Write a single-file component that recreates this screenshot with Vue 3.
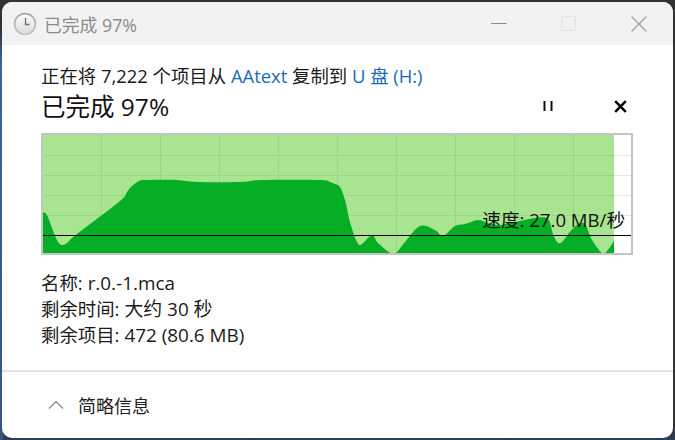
<script setup>
const verticals = [101, 160, 219, 278, 337, 396, 455, 514, 573]
const horizontals = [155.5, 175.5, 195.5, 215.5, 235.5]
const top = [
  [43,212],[47,215],[52,228],[58,242],[63,245],[68,242],[77,234],[120,201],[127,192],[132,186],[140,180.5],[150,180],
  [177,180],[197,182],[240,182],[263,180],[320,180],[330,182],[335,184],[340,187],[345,200],[350,222],[357,242],
  [362,244],[372,235],[378,243],[392,254],[397,252],[405,242],[420,226],[435,230],[443,236],[455,226],[465,224],
  [478,220],[488,223],[500,225],[520,221],[535,218],[548,219],[553,234],[558,243],[563,241],[568,234],[577,225],
  [585,224],[592,240],[602,253],[607,251],[614,241]
]
// Catmull-Rom through the sampled speed values
let curve = 'M43 253 L43 212'
for (let i = 0; i < top.length - 1; i++) {
  const a = top[Math.max(i - 1, 0)]
  const b = top[i]
  const c = top[i + 1]
  const d = top[Math.min(i + 2, top.length - 1)]
  const c1 = [b[0] + (c[0] - a[0]) / 6, b[1] + (c[1] - a[1]) / 6]
  const c2 = [c[0] - (d[0] - b[0]) / 6, c[1] - (d[1] - b[1]) / 6]
  curve += ` C${c1[0].toFixed(1)} ${c1[1].toFixed(1)} ${c2[0].toFixed(1)} ${c2[1].toFixed(1)} ${c[0]} ${c[1]}`
}
const area = curve + ' L614 253 Z'
</script>

<template>
  <div class="desk">
    <div class="win">
      <header class="bar">
        <svg class="clock" width="24" height="24" viewBox="0 0 24 24">
          <defs>
            <linearGradient id="ring" x1="0" y1="0" x2="0" y2="1">
              <stop offset="0" stop-color="#a8a8a8" />
              <stop offset="1" stop-color="#c4c4c4" />
            </linearGradient>
            <linearGradient id="face" x1="0" y1="0" x2="0" y2="1">
              <stop offset="0" stop-color="#fafafa" />
              <stop offset="1" stop-color="#dcdcdc" />
            </linearGradient>
          </defs>
          <circle cx="12" cy="12" r="11.2" fill="url(#ring)" />
          <circle cx="12" cy="12" r="9.6" fill="url(#face)" />
          <path d="M12.5 6v6.5h4" fill="none" stroke="#6e6e6e" stroke-width="1.3" />
        </svg>
        <span class="bar-title">已完成 97%</span>
        <div class="controls">
          <svg width="16" height="16" viewBox="0 0 16 16"><path d="M0 7.5h15.5" stroke="#8c8c8c" stroke-width="1" /></svg>
          <svg width="16" height="16" viewBox="0 0 16 16"><rect x=".5" y=".5" width="14" height="14" rx="1.5" fill="#f1f1f1" stroke="#e2e2e2" /></svg>
          <svg width="16" height="16" viewBox="0 0 16 16"><path d="M.5.5l15 15M15.5.5l-15 15" stroke="#9a9a9a" stroke-width="1.2" /></svg>
        </div>
      </header>

      <main class="body">
        <p class="line">正在将 7,222 个项目从 <a class="link">AAtext</a> 复制到 <a class="link">U 盘 (H:)</a></p>
        <div class="status">
          <h1 class="big">已完成 97%</h1>
          <div class="actions">
            <svg width="12" height="12" viewBox="0 0 12 12"><path d="M2.5 1v10M9.5 1v10" stroke="#111" stroke-width="2" /></svg>
            <svg width="13" height="13" viewBox="0 0 13 13"><path d="M1.2 1.2l10.6 10.6M11.8 1.2L1.2 11.8" stroke="#000" stroke-width="2.4" /></svg>
          </div>
        </div>

        <div class="chart">
          <svg class="plot" width="592" height="122" viewBox="41 133 592 122">
            <rect x="41" y="133" width="592" height="122" fill="#fff" />
            <path v-for="y in horizontals" :key="'w' + y" :d="'M43 ' + y + 'H631'" stroke="#e2e8e2" />
            <rect x="43" y="135" width="571" height="118" fill="#a9e591" />
            <path v-for="y in horizontals" :key="'h' + y" :d="'M43 ' + y + 'H614'" stroke="#98d68a" />
            <path v-for="x in verticals" :key="'v' + x" :d="'M' + (x + 0.5) + ' 135V253'" stroke="#98d68a" />
            <path :d="area" fill="#06ae26" />
            <path d="M43 235.5H631" stroke="#000" />
            <rect x="42" y="134" width="590" height="120" fill="none" stroke="#c2c6c2" stroke-width="2" />
          </svg>
          <span class="speed">速度: 27.0 MB/秒</span>
        </div>

        <dl class="facts">
          <div class="fact"><dt>名称:</dt><dd>r.0.-1.mca</dd></div>
          <div class="fact"><dt>剩余时间:</dt><dd>大约 30 秒</dd></div>
          <div class="fact"><dt>剩余项目:</dt><dd>472 (80.6 MB)</dd></div>
        </dl>
      </main>

      <footer class="foot">
        <svg width="16" height="8" viewBox="0 0 16 8"><path d="M1 7.5l7-7 7 7" fill="none" stroke="#8a8a8a" stroke-width="1.3" /></svg>
        <span class="more">简略信息</span>
      </footer>
    </div>
  </div>
</template>

<style>
html, body { margin: 0; background: #333; }
</style>

<style scoped>
.desk {
  width: 675px;
  height: 440px;
  box-sizing: border-box;
  padding: 2px;
  background: linear-gradient(to bottom, #333 0, #333 30px, #3b659c 60px, #34557f 100%);
  overflow: hidden;
  position: relative;
}
.desk::before {
  content: "";
  position: absolute;
  left: 3px;
  right: 0;
  top: 0;
  bottom: 0;
  background: linear-gradient(to bottom, #333 0, #333 97%, #2c3f58 100%);
}
.win {
  position: relative;
  height: 436px;
  background: #fff;
  border-radius: 10px;
  overflow: hidden;
  display: flex;
  flex-direction: column;
  font-family: "Open Sans", "Noto Sans CJK SC", sans-serif;
  color: #1a1a1a;
}
.bar {
  height: 43px;
  flex: none;
  background: #f2f2f2;
  display: flex;
  align-items: center;
  padding-left: 11px;
}
.clock { flex: none; margin-top: 1px; }
.bar-title {
  margin-left: 7px;
  font-size: 17.8px;
  color: #8b8b8b;
}
.controls {
  margin-left: auto;
  margin-right: 26px;
  display: flex;
  gap: 54px;
}
.body {
  flex: 1;
  padding: 0 39px;
  min-height: 0;
}
.line {
  margin: 18px 0 0;
  font-size: 18.4px;
  line-height: 26px;
  white-space: nowrap;
}
.link { color: #1c6bb5; }
.status {
  display: flex;
  align-items: center;
  justify-content: space-between;
  height: 33px;
}
.big {
  margin: 0;
  font-size: 24.5px;
  font-weight: 400;
  color: #111;
}
.actions {
  display: flex;
  align-items: center;
  gap: 60px;
  margin: 1px 7px 0 0;
}
.chart {
  position: relative;
  width: 592px;
  height: 122px;
  margin-top: 11px;
}
.plot { display: block; }
.speed {
  position: absolute;
  right: 8px;
  top: 75px;
  font-size: 18.6px;
  line-height: 24px;
  color: #111;
  white-space: nowrap;
}
.facts {
  margin: 15px 0 0;
  font-size: 18.4px;
  line-height: 26px;
}
.fact { display: flex; gap: 5px; }
dt { margin: 0; }
dd { margin: 0; font-size: 18.9px; }
.foot {
  height: 68px;
  flex: none;
  border-top: 2px solid #e4e4e4;
  display: flex;
  align-items: center;
  padding-left: 46px;
  gap: 14px;
  box-sizing: border-box;
}
.more { font-size: 18px; color: #222; }
</style>
